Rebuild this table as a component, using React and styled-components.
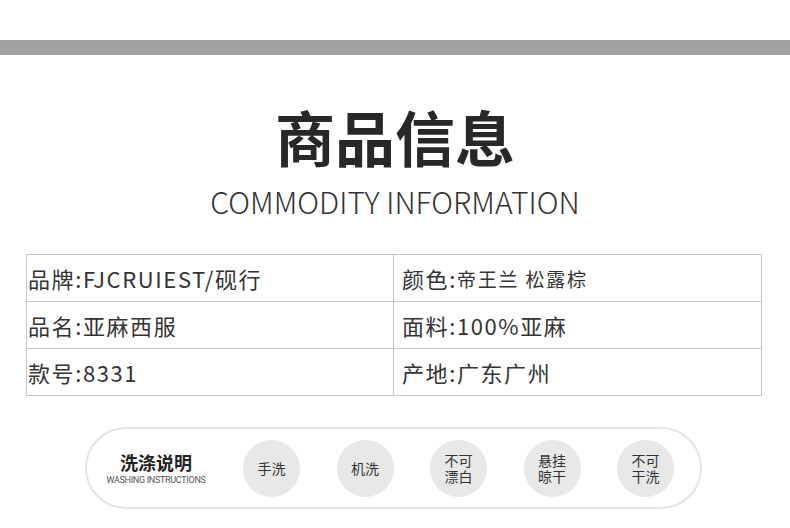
import React from "react";
import styled, { createGlobalStyle } from "styled-components";

const GlobalStyle = createGlobalStyle`
    body {
        margin: 0;
        background: #ffffff;
        font-family: "Noto Sans CJK SC", "Noto Sans", sans-serif;
        color: #333333;
    }
`;

const Page = styled.div`
    width: 790px;
    height: 528px;
    overflow: hidden;
    padding-top: 40px;
    box-sizing: border-box;
`;

const TopBar = styled.div`
    height: 15px;
    background: #a1a1a1;
`;

const Title = styled.h1`
    margin: 49px 0 0;
    text-align: center;
    font-size: 60px;
    line-height: 64px;
    font-weight: 700;
    color: #282828;
`;

const Subtitle = styled.div`
    margin-top: 15px;
    text-align: center;
    font-size: 30px;
    line-height: 36px;
    font-weight: 300;
    color: #333333;
`;

const Table = styled.div`
    display: grid;
    grid-template-columns: 367px 1fr;
    margin: 35px 28px 0 26px;
    border-top: 1px solid #c6c6c6;
    border-left: 1px solid #c6c6c6;
`;

const Cell = styled.div`
    height: 46px;
    display: flex;
    align-items: center;
    padding-left: ${(p) => (p.$right ? "8px" : "1px")};
    border-right: 1px solid #c6c6c6;
    border-bottom: 1px solid #c6c6c6;
    font-size: 22px;
    letter-spacing: 1.6px;
    color: #333333;
    white-space: nowrap;
`;

const Small = styled.span`
    font-size: 19px;
    letter-spacing: 1.8px;
`;

const Pill = styled.div`
    display: flex;
    align-items: center;
    box-sizing: border-box;
    width: 617px;
    height: 82px;
    margin: 31px 0 0 85px;
    border: 2px solid #e4e4e4;
    border-radius: 41px;
    padding-left: 14px;
`;

const Label = styled.div`
    width: 110px;
    margin-right: 32px;
    display: flex;
    flex-direction: column;
    align-items: center;
`;

const LabelCn = styled.div`
    font-size: 18px;
    line-height: 22px;
    font-weight: 700;
    color: #222222;
`;

const LabelEn = styled.div`
    font-family: "Liberation Sans Narrow", "Roboto", sans-serif;
    font-size: 9px;
    line-height: 12px;
    letter-spacing: -0.3px;
    color: #555555;
    margin-top: 1px;
`;

const Circles = styled.div`
    display: flex;
    gap: 36.5px;
`;

const Circle = styled.div`
    width: 57px;
    height: 57px;
    border-radius: 50%;
    background: #e8e8e8;
    display: flex;
    flex-direction: column;
    align-items: center;
    justify-content: center;
    font-size: 14px;
    line-height: 16px;
    color: #333333;
`;

const Line = styled.span`
    display: block;
    height: 16px;
`;

const rows = [
    [<>品牌:FJCRUIEST/砚行</>, <>颜色:<Small>帝王兰 松露棕</Small></>],
    [<>品名:亚麻西服</>, <>面料:100%亚麻</>],
    [<>款号:8331</>, <>产地:广东广州</>],
];

const care = [["手洗"], ["机洗"], ["不可", "漂白"], ["悬挂", "晾干"], ["不可", "干洗"]];

function App() {
    return (
        <Page>
            <GlobalStyle />
            <TopBar />
            <Title>商品信息</Title>
            <Subtitle>COMMODITY INFORMATION</Subtitle>
            <Table>
                {rows.map((r, i) => (
                    <React.Fragment key={i}>
                        <Cell>{r[0]}</Cell>
                        <Cell $right>{r[1]}</Cell>
                    </React.Fragment>
                ))}
            </Table>
            <Pill>
                <Label>
                    <LabelCn>洗涤说明</LabelCn>
                    <LabelEn>WASHING INSTRUCTIONS</LabelEn>
                </Label>
                <Circles>
                    {care.map((lines, i) => (
                        <Circle key={i}>
                            {lines.map((l) => (
                                <Line key={l}>{l}</Line>
                            ))}
                        </Circle>
                    ))}
                </Circles>
            </Pill>
        </Page>
    );
}

export default App;
